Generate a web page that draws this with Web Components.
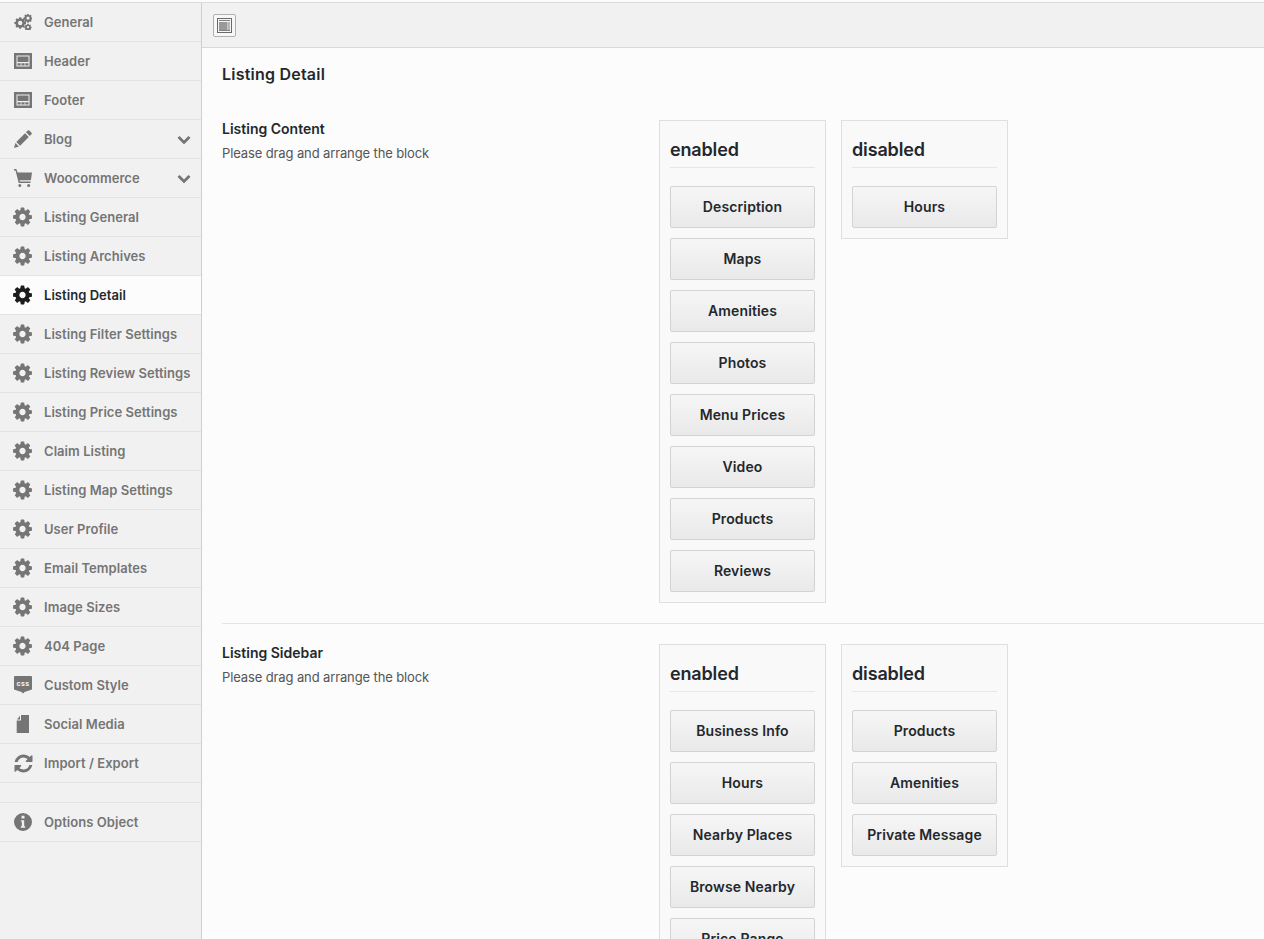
<!DOCTYPE html>
<html lang="en"><head><meta charset="utf-8"><title>Listing Detail</title>
<style>
html,body{margin:0;height:939px;overflow:hidden;background:#fcfcfc;font-family:Inter,"Liberation Sans",sans-serif;}
</style></head><body>
<opt-app></opt-app>
<script>
const WEBSITE='<svg viewBox="0 0 18 16"><path fill="currentColor" fill-rule="evenodd" d="M0 0h18v16H0zM2.500 2.500v11h13v-11z"/><path fill="currentColor" d="M3.500 3.500h11v5.500h-11zM3.500 10.200h3.200v2.300H3.500zM7.400 10.200h3.200v2.300H7.400zM11.300 10.200h3.200v2.300h-3.200z"/></svg>';
const ICONS={
cogs:'<svg viewBox="0 0 18 16"><path fill="currentColor" fill-rule="evenodd" d="M5.300 3.200h1.800l.4 1.300.9.4 1.200-.6 1.300 1.300-.6 1.200.4.900 1.300.4v1.800l-1.300.4-.4.900.6 1.200-1.300 1.300-1.200-.6-.9.4-.4 1.300H5.300l-.4-1.300-.9-.4-1.200.6-1.300-1.300.6-1.200-.4-.9L.4 9.900V8.100l1.300-.4.4-.9-.6-1.200 1.300-1.300 1.200.6.9-.4zM6.200 6.800a2.200 2.200 0 1 0 0 4.400 2.200 2.200 0 0 0 0-4.400z"/><path fill="currentColor" fill-rule="evenodd" d="M13.300 0h1.400l.3 1 .7.300.9-.5 1 1-.5.900.3.700 1 .3v1.400l-1 .3-.3.700.5.900-1 1-.9-.5-.7.300-.3 1h-1.400l-.3-1-.7-.3-.9.500-1-1 .5-.9-.3-.7-1-.3V3.400l1-.3.3-.7-.5-.9 1-1 .9.500.7-.3zM14 2.500a1.600 1.600 0 1 0 0 3.200 1.600 1.600 0 0 0 0-3.200z"/><path fill="currentColor" fill-rule="evenodd" d="M13.400 9.800h1.200l.2.800.6.300.8-.4.800.8-.4.800.3.600.8.200v1.200l-.8.200-.3.600.4.800-.8.800-.8-.4-.6.300-.2.600h-1.200l-.2-.6-.6-.3-.8.400-.8-.8.4-.8-.3-.6-.8-.2v-1.200l.8-.2.3-.6-.4-.8.8-.8.8.4.6-.3zM14 11.900a1.200 1.200 0 1 0 0 2.400 1.200 1.200 0 0 0 0-2.400z"/></svg>',
header:WEBSITE,footer:WEBSITE,
pencil:'<svg viewBox="0 0 18 18"><path fill="currentColor" d="M0 18l1.400-5 3.600 3.600zM2.300 11.900L11 3.200l3.800 3.800-8.700 8.700zM12 2.200l1.700-1.700a1.200 1.200 0 0 1 1.600 0l2.200 2.200a1.200 1.200 0 0 1 0 1.600L15.800 6z"/></svg>',
cart:'<svg viewBox="0 0 18 18"><path fill="currentColor" d="M0 0h2.300l1.300 3.500H18l-1.100 7.700H5.600l.3 1.300H16.500v1.400H4.700L1.500 1.500H0z"/><circle fill="currentColor" cx="5.800" cy="16.400" r="1.500"/><circle fill="currentColor" cx="14.600" cy="16.400" r="1.500"/></svg>',
cog:'<svg viewBox="0 0 1792 1792"><path fill="currentColor" d="M1152 896q0-106-75-181t-181-75-181 75-75 181 75 181 181 75 181-75 75-181zm512-109v222q0 12-8 23t-20 13l-185 28q-19 54-39 91 35 50 107 138 10 12 10 25t-9 23q-27 37-99 108t-94 71q-12 0-26-9l-138-108q-44 23-91 38-16 136-29 186-7 28-36 28h-222q-14 0-24.500-8.500t-11.500-21.500l-28-184q-49-16-90-37l-141 107q-10 9-25 9-14 0-25-11-126-114-165-168-7-10-7-23 0-12 8-23 15-21 51-66.500t54-70.500q-27-50-41-99l-183-27q-13-2-21-12.500t-8-23.500v-222q0-12 8-23t19-13l186-28q14-46 39-92-40-57-107-138-10-12-10-24 0-10 9-23 26-36 98.500-107.500t94.500-71.500q13 0 26 10l138 107q44-23 91-38 16-136 29-186 7-28 36-28h222q14 0 24.500 8.500t11.500 21.500l28 184q49 16 90 37l142-107q9-9 24-9 13 0 25 10 129 119 165 170 7 8 7 22 0 12-8 23-15 21-51 66.500t-54 70.500q26 50 41 98l183 28q13 2 21 12.500t8 23.500z"/></svg>',
css:'<svg viewBox="0 0 18 18"><path fill="currentColor" d="M1 0h16a1 1 0 0 1 1 1v12.500l-7.500 2.500L9 17.500 7.500 16 0 13.500V1a1 1 0 0 1 1-1z"/><text x="9" y="9.800" text-anchor="middle" font-family="Inter,sans-serif" font-size="7" font-weight="700" letter-spacing=".3" fill="#f1f1f1">css</text></svg>',
file:'<svg viewBox="0 0 18 18"><path fill="currentColor" d="M7 0h8v18H2.700V5.500H7zM3 4.500L6 .8v3.700z"/></svg>',
refresh:'<svg viewBox="0 0 1792 1792"><path fill="currentColor" d="M1639 1056q0 5-1 7-64 268-268 434.500t-478 166.500q-146 0-282.500-55t-243.500-157l-129 129q-19 19-45 19t-45-19-19-45v-448q0-26 19-45t45-19h448q26 0 45 19t19 45-19 45l-137 137q71 66 161 102t187 36q134 0 250-65t186-179q11-17 53-117 8-23 30-23h192q13 0 22.500 9.500t9.500 22.500zm25-800v448q0 26-19 45t-45 19h-448q-26 0-45-19t-19-45 19-45l138-138q-148-137-349-137-134 0-250 65t-186 179q-11 17-53 117-8 23-30 23h-199q-13 0-22.500-9.500t-9.500-22.500v-7q65-268 270-434.500t480-166.500q146 0 284 55.500t245 156.500l130-129q19-19 45-19t45 19 19 45z"/></svg>',
info:'<svg viewBox="0 0 18 18"><path fill="currentColor" fill-rule="evenodd" d="M9 0a9 9 0 1 1 0 18A9 9 0 0 1 9 0zM7.500 2.800v2.600h3V2.800zM6.800 7.200v1.400h1v4.600h-1v1.600h4.400v-1.600h-1V7.200z"/></svg>',
chev:'<svg viewBox="0 0 1792 1792"><path fill="currentColor" d="M1683 808l-742 741q-19 19-45 19t-45-19l-742-741q-19-19-19-45.500t19-45.500l166-165q19-19 45-19t45 19l531 531 531-531q19-19 45-19t45 19l166 165q19 19 19 45.500t-19 45.500z"/></svg>'
};
class OptApp extends HTMLElement{constructor(){super();const s=this.attachShadow({mode:'open'});
const items=[['cogs','General'],['header','Header'],['footer','Footer'],['pencil','Blog',1],['cart','Woocommerce',1],['cog','Listing General'],['cog','Listing Archives'],['cog','Listing Detail',0,1],['cog','Listing Filter Settings'],['cog','Listing Review Settings'],['cog','Listing Price Settings'],['cog','Claim Listing'],['cog','Listing Map Settings'],['cog','User Profile'],['cog','Email Templates'],['cog','Image Sizes'],['cog','404 Page'],['css','Custom Style'],['file','Social Media'],['refresh','Import / Export']];
const row=(i)=>`<side-item icon="${i[0]}" ${i[2]?'chevron':''} ${i[3]?'active':''}>${i[1]}</side-item>`;
const col=(t,l)=>`<block-column heading="${t}">${l.map(x=>`<block-button>${x}</block-button>`).join('')}</block-column>`;
s.innerHTML=`<style>
:host{display:flex;flex-direction:column;height:939px;overflow:hidden}
.top{height:2px;background:#fcfcfc;flex:none}
.line{height:1px;background:#dcdcdc;flex:none}
.wrap{display:flex;flex:1;min-height:0}
nav{width:201px;flex:none;background:#f1f1f1;border-right:1px solid #cfcfcf;display:flex;flex-direction:column}
.spacer{height:20px;flex:none;border-bottom:1px solid #e4e4e4;box-sizing:border-box}
main{flex:1;min-width:0;display:flex;flex-direction:column}
.bar{height:45px;box-sizing:border-box;flex:none;background:#f1f1f1;border-bottom:1px solid #d9d9d9;display:flex;align-items:center;padding-left:11px}
.expand{width:23px;height:23px;box-sizing:border-box;border:1px solid #b0b0b0;border-radius:2px;background:#f7f7f7;display:flex;align-items:center;justify-content:center;color:#666}
.expand svg{width:15px;height:15px;display:block}
.body{padding:0 0 0 20px;overflow:hidden;flex:1}
h1{margin:0;font-size:16px;font-weight:600;letter-spacing:.22px;color:#23282d;line-height:20px;padding-top:16px;height:56px}
</style>
<div class="top"></div><div class="line"></div>
<div class="wrap"><nav>${items.map(row).join('')}<div class="spacer"></div><side-item icon="info">Options Object</side-item></nav>
<main><div class="bar"><div class="expand"><svg viewBox="0 0 15 15"><path fill="#6a6a6a" fill-rule="evenodd" d="M0 0h15v15H0zM1 1v13h13V1z"/><path fill="#808080" d="M2 2h11v1H2zM2 13h11v-1H2z"/><path fill="#999" d="M2 4h8.500v8H2z"/><path fill="#777" d="M11.500 4h1v8h-1z"/></svg></div></div>
<div class="body"><h1>Listing Detail</h1>
<option-section heading="Listing Content" desc="Please drag and arrange the block" divided>${col('enabled',['Description','Maps','Amenities','Photos','Menu Prices','Video','Products','Reviews'])}${col('disabled',['Hours'])}</option-section>
<option-section heading="Listing Sidebar" desc="Please drag and arrange the block">${col('enabled',['Business Info','Hours','Nearby Places','Browse Nearby','Price Range'])}${col('disabled',['Products','Amenities','Private Message'])}</option-section>
</div></main></div>`;}}
class SideItem extends HTMLElement{constructor(){super();this.attachShadow({mode:'open'});}
connectedCallback(){const ic=this.getAttribute('icon');this.shadowRoot.innerHTML=`<style>
:host{display:flex;align-items:center;height:39px;box-sizing:border-box;border-bottom:1px solid #e4e4e4;padding:0 10px 0 14px;color:#757575;font-size:13px;font-weight:600;letter-spacing:.05px;flex:none}
:host([active]){background:#fcfcfc;color:#23282d}
.i{width:18px;height:18px;flex:none;margin-right:12px;display:flex;align-items:center;justify-content:center}
.i svg{width:18px;height:18px;display:block;flex:none}
.i.cog svg{width:22px;height:22px;transform:translateX(-.5px)}
.i.refresh svg{width:21px;height:21px}
:host([active]) .i{color:#1c1c1c}
.i.header svg,.i.footer svg,.i.cogs svg{height:16px}
.t{flex:1;white-space:nowrap}
.c{width:14px;height:14px}.c svg{display:block;width:14px;height:14px}
</style><span class="i ${ic}">${ICONS[ic]}</span><span class="t"><slot></slot></span>${this.hasAttribute('chevron')?`<span class="c">${ICONS.chev}</span>`:''}`;}}
class OptionSection extends HTMLElement{constructor(){super();this.attachShadow({mode:'open'});}
connectedCallback(){this.shadowRoot.innerHTML=`<style>
:host{display:grid;grid-template-columns:437px 1fr;box-sizing:border-box;padding-bottom:20px;margin-bottom:20px}
:host([divided]){border-bottom:1px solid #e4e4e4}
.h{font-size:14px;font-weight:600;color:#23282d;line-height:18px}
.d{font-size:13px;letter-spacing:-.12px;color:#555;line-height:18px;margin-top:6px}
.cols{display:flex;gap:15px;align-items:flex-start}
</style><div><div class="h">${this.getAttribute('heading')}</div><div class="d">${this.getAttribute('desc')}</div></div><div class="cols"><slot></slot></div>`;}}
class BlockColumn extends HTMLElement{constructor(){super();this.attachShadow({mode:'open'});}
connectedCallback(){this.shadowRoot.innerHTML=`<style>
:host{display:block;box-sizing:border-box;width:167px;border:1px solid #dfdfdf;background:#f9f9f9;padding:0 10px 10px}
h3{margin:0 0 18px;height:47px;box-sizing:border-box;border-bottom:1px solid #e6e6e6;font-size:18px;font-weight:600;letter-spacing:-.15px;color:#23282d;line-height:22px;padding-top:18px}
.l{display:flex;flex-direction:column;gap:10px}
</style><h3>${this.getAttribute('heading')}</h3><div class="l"><slot></slot></div>`;}}
class BlockButton extends HTMLElement{constructor(){super();this.attachShadow({mode:'open'});}
connectedCallback(){this.shadowRoot.innerHTML=`<style>
:host{display:flex;align-items:center;justify-content:center;height:42px;box-sizing:border-box;border:1px solid #d3d3d3;border-radius:2px;padding-bottom:2px;background:linear-gradient(#f6f6f6,#e9e9e9);font-size:14px;font-weight:600;letter-spacing:.12px;color:#23282d;white-space:nowrap}
</style><slot></slot>`;}}
customElements.define('side-item',SideItem);customElements.define('option-section',OptionSection);customElements.define('block-column',BlockColumn);customElements.define('block-button',BlockButton);customElements.define('opt-app',OptApp);
</script></body></html>
